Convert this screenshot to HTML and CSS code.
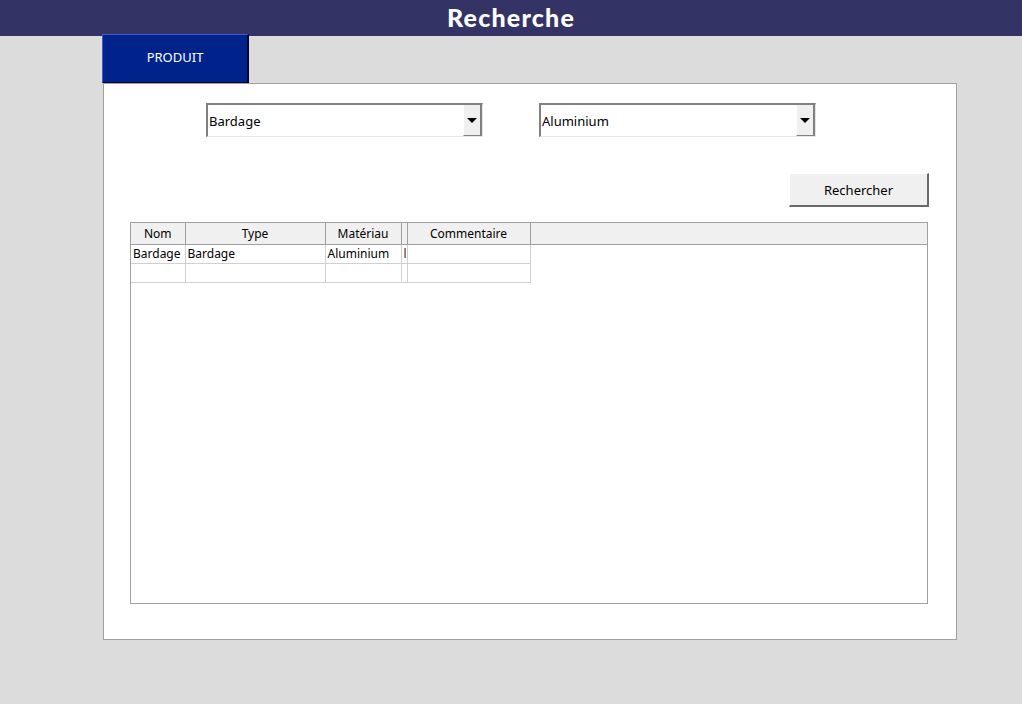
FILE: index.html
```html
<!DOCTYPE html>
<html lang="fr">
<head>
<meta charset="utf-8">
<title>Recherche</title>
<link rel="stylesheet" href="styles.css">
</head>
<body>
<header class="topbar"><h1 class="title">Recherche</h1></header>
<main class="main">
  <div class="tabs"><div class="tab">PRODUIT</div></div>
  <section class="panel">
    <div class="filters">
      <div class="combo"><span class="combo-text">Bardage</span><span class="combo-btn"><span class="arrow"></span></span></div>
      <div class="combo"><span class="combo-text">Aluminium</span><span class="combo-btn"><span class="arrow"></span></span></div>
    </div>
    <div class="actions"><button class="btn">Rechercher</button></div>
    <div class="grid">
      <table class="results">
        <colgroup>
          <col class="c-nom"><col class="c-type"><col class="c-mat"><col class="c-x"><col class="c-com"><col class="c-rest">
        </colgroup>
        <thead>
          <tr><th>Nom</th><th>Type</th><th>Matériau</th><th></th><th>Commentaire</th><th class="rest"></th></tr>
        </thead>
        <tbody>
          <tr><td>Bardage</td><td>Bardage</td><td>Aluminium</td><td class="trunc">l</td><td></td><td class="rest"></td></tr>
          <tr><td></td><td></td><td></td><td></td><td></td><td class="rest"></td></tr>
        </tbody>
      </table>
    </div>
  </section>
</main>
</body>
</html>
```
FILE: styles.css
```css
html, body { margin: 0; padding: 0; }
body {
  background: #dcdcdc;
  font-family: "Noto Sans", "Open Sans", sans-serif;
  width: 1022px;
  height: 704px;
  overflow: hidden;
}
.topbar {
  height: 36px;
  background: #333366;
  display: flex;
  align-items: center;
  justify-content: center;
}
.title {
  margin: 0 0 3px 0;
  color: #ffffff;
  font-family: Lato, "Noto Sans", sans-serif;
  font-weight: 900;
  font-size: 25px;
  line-height: 30px;
  letter-spacing: 1.2px;
}
.main {
  padding-left: 102px;
}
.tabs {
  display: flex;
  margin-top: -2px;
}
.tab {
  width: 144px;
  height: 44px;
  padding-bottom: 3px;
  background: #00238b;
  border-top: 1px solid #3a5fd0;
  border-left: 1px solid #3a5fd0;
  border-right: 2px solid #000033;
  border-bottom: 1px solid #000033;
  color: #ffffff;
  font-size: 13px;
  display: flex;
  align-items: center;
  justify-content: center;
  box-sizing: content-box;
}
.panel {
  margin-left: 1px;
  background: #ffffff;
  border: 1px solid #a0a0a0;
  padding: 19px 27px 0 26px;
  box-sizing: border-box;
  width: 854px;
  height: 557px;
}
.filters {
  display: flex;
  gap: 56px;
  padding-left: 76px;
}
.combo {
  width: 277px;
  height: 34px;
  box-sizing: border-box;
  border-top: 2px solid #808080;
  border-left: 2px solid #808080;
  border-bottom: 1px solid #e6e6e6;
  border-right: 1px solid #e6e6e6;
  display: flex;
  align-items: stretch;
  background: #ffffff;
}
.combo-text {
  flex: 1;
  font-size: 13px;
  color: #000000;
  display: flex;
  align-items: center;
  padding-left: 1px;
}
.combo-btn {
  width: 16px;
  background: #f0f0f0;
  border-left: 1px solid #ffffff;
  border-right: 2px solid #808080;
  border-bottom: 1px solid #808080;
  display: flex;
  align-items: center;
  justify-content: center;
}
.arrow {
  width: 0;
  height: 0;
  border-left: 5px solid transparent;
  border-right: 5px solid transparent;
  border-top: 5px solid #000000;
}
.actions {
  display: flex;
  justify-content: flex-end;
  margin-top: 36px;
}
.btn {
  width: 140px;
  height: 34px;
  background: #f0f0f0;
  border-top: 1px solid #ffffff;
  border-left: 1px solid #ffffff;
  border-right: 2px solid #696969;
  border-bottom: 2px solid #696969;
  font-family: "Noto Sans", "Open Sans", sans-serif;
  font-size: 13px;
  color: #000000;
  padding: 0;
  margin: 0;
}
.grid {
  margin-top: 15px;
  width: 798px;
  height: 382px;
  box-sizing: border-box;
  border: 1px solid #a0a0a0;
  background: #ffffff;
  overflow: hidden;
}
.results {
  border-collapse: collapse;
  table-layout: fixed;
  width: 796px;
  font-size: 12px;
  color: #000000;
}
.c-nom { width: 54px; }
.c-type { width: 140px; }
.c-mat { width: 76px; }
.c-x { width: 6px; }
.c-com { width: 123px; }
.results th {
  height: 21px;
  padding: 1px 0 0 0;
  box-sizing: border-box;
  background: #f0f0f0;
  font-weight: normal;
  border-right: 1px solid #a0a0a0;
  border-bottom: 1px solid #a0a0a0;
  text-align: center;
  overflow: hidden;
  white-space: nowrap;
}
.results th.rest { border-right: none; }
.results td {
  height: 18px;
  padding: 0 0 0 2px;
  border-right: 1px solid #d0d0d0;
  border-bottom: 1px solid #d0d0d0;
  white-space: nowrap;
  overflow: hidden;
  text-align: left;
}
.results td.trunc {
  padding-left: 2px;
  color: #5a2a00;
}
.results td.rest {
  border: none;
}
```
